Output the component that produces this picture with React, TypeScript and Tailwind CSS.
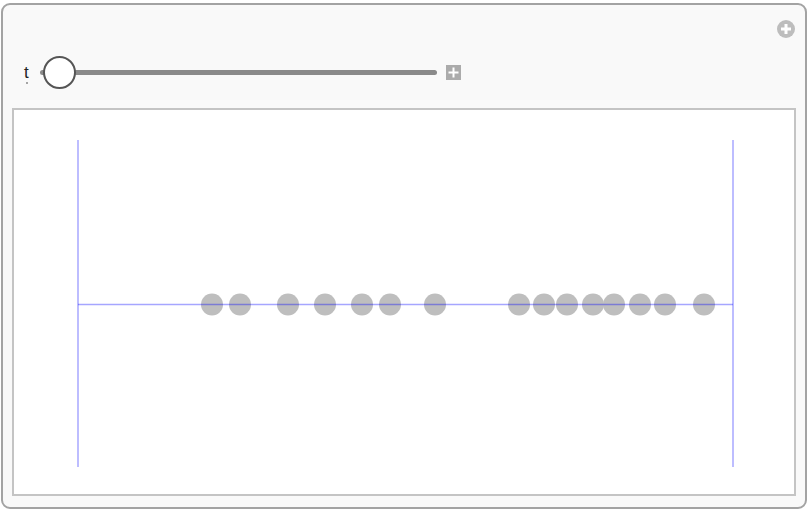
const dots = [212, 240, 288, 325, 362, 390, 435, 519, 544, 567, 593, 614, 640, 665, 704];

function PlusCircle() {
  return (
    <svg width="18" height="18" viewBox="0 0 18 18">
      <circle cx="9" cy="9" r="9" fill="#bdbdbd" />
      <rect x="4" y="7.5" width="10" height="3" fill="#fff" />
      <rect x="7.5" y="4" width="3" height="10" fill="#fff" />
    </svg>
  );
}

function Slider() {
  return (
    <div className="flex items-center h-[32px]">
      <span
        className="relative w-[28px] pl-[12px] text-[17px] leading-none text-[#222]"
        style={{ fontFamily: '"Liberation Sans", Arial, sans-serif' }}
      >
        t
        <span className="absolute left-[14px] top-[18px] w-[2px] h-[2px] rounded-full bg-[#888]" />
      </span>
      {/* track */}
      <div className="relative w-[397px] h-[5px] rounded-full bg-[#8a8a8a]">
        <div className="absolute left-[3px] top-[-14px] w-[33px] h-[33px] rounded-full border-2 border-[#555] bg-white" />
      </div>
      <div className="ml-[9px] w-[15px] h-[15px] bg-[#ababab] flex items-center justify-center">
        <svg width="11" height="11" viewBox="0 0 11 11">
          <rect x="0.5" y="4.5" width="10" height="2" fill="#fff" />
          <rect x="4.5" y="0.5" width="2" height="10" fill="#fff" />
        </svg>
      </div>
    </div>
  );
}

export default function App() {
  return (
    <div className="w-[808px] h-[514px] bg-white pt-[3px] pl-[1px]">
      <div className="w-[806px] h-[506px] rounded-[9px] border-2 border-[#a3a3a3] bg-[#f9f9f9] px-[9px]">
        {/* header */}
        <div className="h-[103px] flex flex-col">
          <div className="flex justify-end pt-[15px] pr-[1px]">
            <PlusCircle />
          </div>
          <div className="mt-[18px]">
            <Slider />
          </div>
        </div>

        {/* plot panel */}
        <div className="w-[784px] h-[388px] border-2 border-[#c4c4c4] bg-white">
          <svg width="780" height="384" viewBox="0 0 780 384">
            {dots.map((x) => (
              <circle key={x} cx={x - 14} cy={194.5} r={11} fill="#bebebe" />
            ))}
            <line x1="64" y1="30" x2="64" y2="357" stroke="#0000ff" strokeOpacity="0.35" strokeWidth="1.5" />
            <line x1="719" y1="30" x2="719" y2="357" stroke="#0000ff" strokeOpacity="0.35" strokeWidth="1.5" />
            <line x1="64" y1="194.5" x2="719" y2="194.5" stroke="#0000ff" strokeOpacity="0.35" strokeWidth="1.5" />
          </svg>
        </div>
      </div>
    </div>
  );
}
